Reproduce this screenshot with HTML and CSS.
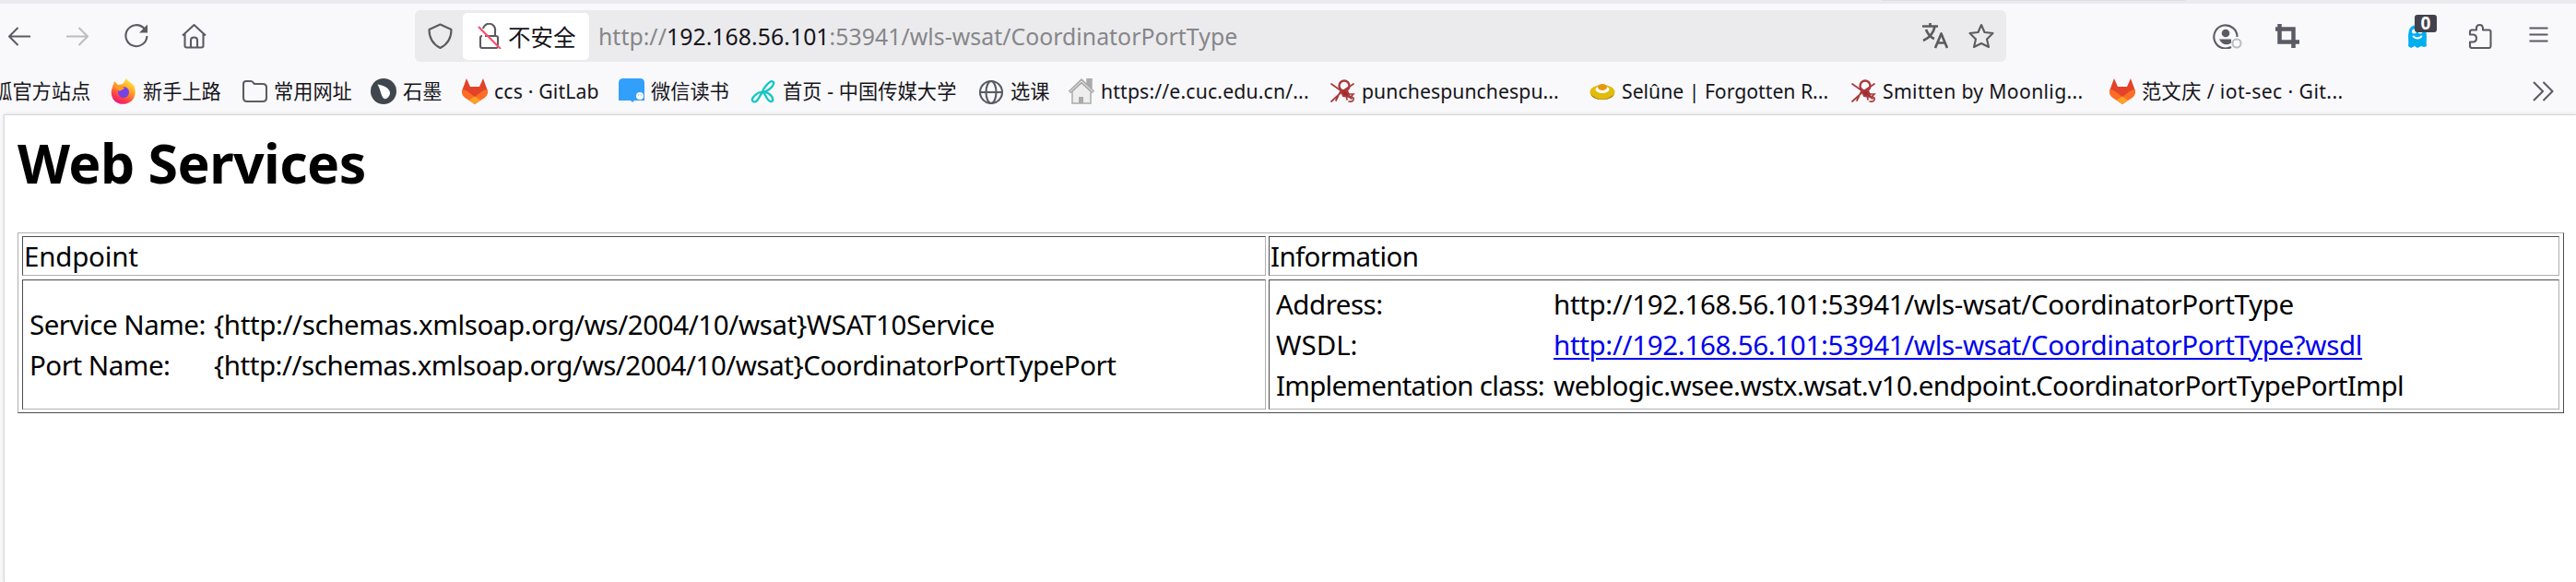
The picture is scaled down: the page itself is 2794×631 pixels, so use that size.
FILE: index.html
```html
<!DOCTYPE html>
<html lang="zh-CN">
<head>
<meta charset="utf-8">
<title>Web Services</title>
<link rel="stylesheet" href="styles.css">
</head>
<body>
<svg class="defs" width="0" height="0">
  <symbol id="gitlab" viewBox="0 0 28 28">
    <path fill="#e24329" d="M5 0 0.6 12 0 16l14 12 14-12-.6-4L23 0l-4 9H9z"/>
    <path fill="#fc6d26" d="M.4 12c2 0 5 1 7 3l6.600 5 6.600-5c2-2 5-3 7-3 1 4 0 7-3 9L14 28 3.400 21C.5 19-.6 16 .4 12z"/>
    <path fill="#fca326" d="m14 19.500 6 4L14 28l-6-4.500z"/>
  </symbol>
  <symbol id="sketch" viewBox="0 0 28 28">
    <g fill="none" stroke="#a93a3d" stroke-linecap="round">
      <circle cx="16" cy="8" r="5.500" stroke-width="2.400"/>
      <path d="M2 6l10 7 12 9M26 6 14 14 2 25M12 14l-5 10M17 13l2 10" stroke-width="1.700"/>
      <path d="M12 13h7l3 7-7-1z" fill="#a52a2e" stroke-width="2"/>
      <path d="M21 17h5l-3 3c5 0 4 6-2 5" stroke-width="1.600"/>
    </g>
  </symbol>
</svg>
<div class="tabstrip"><div class="tab-edge"></div></div>
<header class="chrome">
  <div class="toolbar">
    <nav class="nav">
      <svg class="ico" viewBox="0 0 28 28"><path d="M26 14.500H3M12.500 5 3 14.500l9.500 9.500"/></svg>
      <svg class="ico off" viewBox="0 0 28 28"><path d="M2 14.500h23M15.500 5l9.500 9.500-9.500 9.500"/></svg>
      <svg class="ico" viewBox="0 0 28 28"><path d="M26.400 14A11.500 11.500 0 1 1 23.500 6"/><path class="solid" d="M27 1.500v9h-9z"/></svg>
      <svg class="ico" viewBox="0 0 28 28"><path d="M2 13.500 14.500 2 27 13.500M4.500 11.500v13q0 2 2 2h16q2 0 2-2v-13M11 26.500v-8q0-3 3.500-3t3.500 3v8"/></svg>
    </nav>
    <div class="urlbar">
      <svg class="ico gray shield" viewBox="0 0 28 28"><path d="M14.500 1.500 26.500 7c0 9-3 15.500-12 20C5.500 22.500 2.500 16 2.500 7z"/></svg>
      <div class="security">
        <svg class="ico gray" viewBox="0 0 28 28"><path d="M8 6a6.500 6.500 0 0 1 13 2.500V14M10 14h12q2 0 2 2v9q0 2-2 2H7q-2 0-2-2v-9q0-2 2-2"/><path class="slash" d="M3 4l24 24"/></svg>
        <span>不安全</span>
      </div>
      <div class="url"><span>http://</span><b>192.168.56.101</b><span>:53941/wls-wsat/CoordinatorPortType</span></div>
      <svg class="ico gray translate" viewBox="0 0 28 28"><path d="M0 3.500h17M8.500 0v3.500M13.500 4C12 11 8 16 1 19M4 7c2 5 5 8.500 9 10M14 27l6.500-15.500L27 27M16.500 21.500h8" stroke-width="2.700"/></svg>
      <svg class="ico gray star" viewBox="0 0 28 28"><path stroke-linejoin="round" d="M14 2l3.500 8 9 1-6.500 6.500 2 8.500-8-4-8 4 2-8.500L1.500 11l9-1z"/></svg>
    </div>
    <div class="tools">
      <svg class="ico account" viewBox="0 0 32 28"><path d="M20 26A12.600 12.600 0 1 1 26.500 15"/><circle class="solid" cx="14" cy="11" r="4.300"/><path class="solid" d="M7 17.500h13v4c-4 3-10 2.500-13-4z"/><circle class="status" cx="26" cy="22" r="4.500"/></svg>
      <svg class="ico crop" viewBox="0 0 28 28"><path stroke-width="4.500" d="M5.500 1v19.500H27M1 6.500h19.500V27"/></svg>
      <div class="ghost">
        <svg viewBox="0 0 24 26"><path fill="#00aef0" d="M2 24C3 19 1 14 3 7 5-1 19-1 21 7c2 7 0 12 1 17l-3 1-3-1-4 2-3-2-4 2z"/><circle cx="8.500" cy="8" r="2.500" fill="#fff"/><circle cx="15" cy="8" r="2.500" fill="#fff"/><path d="M7 13q5 5 10 0" fill="none" stroke="#fff" stroke-width="2"/></svg>
        <span class="badge">0</span>
      </div>
      <svg class="ico puzzle" viewBox="0 0 28 28"><path d="M4 7.500h6V6q0-4 3.500-4T17 6v1.500h6.500q2 0 2 2V25q0 2-2 2h-18q-2.500 0-2.500-2v-4.500h3q4 0 4-4t-4-4H3v-3q0-2 2-2"/></svg>
      <svg class="ico menu" viewBox="0 0 28 28"><path d="M3.500 5.500h20M3.500 12.500h20M3.500 19.500h20"/></svg>
    </div>
  </div>
  <div class="bookmarks">
    <div class="bm first"><span>火狐官方站点</span></div>
    <div class="bm"><svg viewBox="0 0 28 28"><defs><linearGradient id="fire" x1=".8" y1="0" x2=".3" y2="1"><stop offset="0" stop-color="#fff14a"/><stop offset=".45" stop-color="#ff9a24"/><stop offset=".8" stop-color="#ff364e"/><stop offset="1" stop-color="#e61587"/></linearGradient></defs><path fill="url(#fire)" d="M4 3l4 4 5-1 4-6c2 4 8 5 9 10 5 19-19 23-24 11C-1 14 2 11 4 3z"/><circle cx="14" cy="15" r="6" fill="#7542e5"/><path fill="#ff9a24" d="M4 9c4-3 8 0 11 1-1 3-4 2-5 4z"/></svg><span>新手上路</span></div>
    <div class="bm"><svg class="ico" viewBox="0 0 28 28"><path d="M2 6q0-3 3-3h5q2 0 3 2l1 1h9q4 0 4 4v11q0 4-4 4H6q-4 0-4-4z"/></svg><span>常用网址</span></div>
    <div class="bm"><svg viewBox="0 0 28 28"><circle cx="14" cy="14" r="14" fill="#40464d"/><path d="M7.500 6.500c7 1 13 4 13.500 9 0 5-5 8-7 6-3-3-3-9-6.500-15z" fill="#fff"/></svg><span>石墨</span></div>
    <div class="bm"><svg><use href="#gitlab"/></svg><span class="t5">ccs · GitLab</span></div>
    <div class="bm"><svg viewBox="0 0 28 28"><path d="M5 0h18q5 0 5 5v19H17l-2 2-2-2H0V5q0-5 5-5z" fill="#329ffb"/><circle cx="23" cy="19" r="4" fill="#fff"/><circle cx="21.700" cy="18" r=".6" fill="#329ffb"/><circle cx="24.300" cy="18" r=".6" fill="#329ffb"/></svg><span>微信读书</span></div>
    <div class="bm"><svg viewBox="0 0 28 28"><g fill="none" stroke="#16c5c6" stroke-width="2.300" stroke-linejoin="round" stroke-linecap="round"><path d="M13 15c0-3 6-10 8-11 2-2 5 0 4 2-1 4-8 9-12 9z"/><path d="M13 15c-5-1-10 5-11 7-1 3 2 4 4 3 3-2 3-5 7-10z"/><path d="M14 15c4-1 10 4 10 7 1 3-2 4-4 2-2-1-3-5-6-9z"/></g></svg><span class="t7">首页 - 中国传媒大学</span></div>
    <div class="bm"><svg class="ico" viewBox="0 0 28 28"><circle cx="14" cy="15" r="12"/><ellipse cx="14" cy="15" rx="5.500" ry="12"/><path d="M2 15h24"/></svg><span>选课</span></div>
    <div class="bm"><svg viewBox="0 0 28 28"><path d="M4 14v13h20V14L14 5z" fill="#eee" stroke="#aaa" stroke-width="1.500"/><path d="M1 15 14 2.500 27 15M21 8V1h3v10" fill="none" stroke="#aaa" stroke-width="3.500"/><path d="M1.500 14.500 14 3l12.500 11.500" fill="none" stroke="#eee"/><path d="M11 27v-7h5v7" fill="#aaa"/></svg><span class="t9">https://e.cuc.edu.cn/...</span></div>
    <div class="bm"><svg><use href="#sketch"/></svg><span class="t10">punchespunchespu...</span></div>
    <div class="bm"><svg viewBox="0 0 28 28"><ellipse cx="14" cy="15" rx="13.500" ry="8" fill="#e2bb0c"/><path d="M1 17q13 11 26 0-3 6-13 6T1 17z" fill="#a77b10"/><ellipse cx="14" cy="12" rx="7.500" ry="4" fill="#fff"/><ellipse cx="14" cy="9.500" rx="5" ry="3.500" fill="#e9960f"/></svg><span class="t11">Selûne | Forgotten R...</span></div>
    <div class="bm"><svg><use href="#sketch"/></svg><span class="t12">Smitten by Moonlig...</span></div>
    <div class="bm"><svg><use href="#gitlab"/></svg><span class="t13">范文庆 / iot-sec · Git...</span></div>
    <svg class="ico more" viewBox="0 0 28 28"><path d="M3 4l10 10L3 24M13.500 4l10 10-10 10"/></svg>
  </div>
</header>
<main class="page">
  <h1>Web Services</h1>
  <div class="table">
    <div class="cell head"><span class="w-endpoint">Endpoint</span></div>
    <div class="cell head"><span class="w-info">Information</span></div>
    <div class="cell body left">
      <span class="w-sn">Service Name:</span><span class="w-sv">{http://schemas.xmlsoap.org/ws/2004/10/wsat}WSAT10Service</span>
      <span class="w-pn">Port Name:</span><span class="w-pv">{http://schemas.xmlsoap.org/ws/2004/10/wsat}CoordinatorPortTypePort</span>
    </div>
    <div class="cell body right">
      <span class="w-ad">Address:</span><span class="w-av">http://192.168.56.101:53941/wls-wsat/CoordinatorPortType</span>
      <span class="w-ws">WSDL:</span><span class="w-av"><a href="#">http://192.168.56.101:53941/wls-wsat/CoordinatorPortType?wsdl</a></span>
      <span class="w-ic">Implementation class:</span><span class="w-iv">weblogic.wsee.wstx.wsat.v10.endpoint.CoordinatorPortTypePortImpl</span>
    </div>
  </div>
</main>
</body>
</html>
```
FILE: styles.css
```css
* { box-sizing: border-box; }
body {
  margin: 0; height: 631px; overflow: hidden; background: #f9f9fb;
  font-family: "Noto Sans", "Noto Sans CJK SC", sans-serif;
  display: flex; flex-direction: column;
}
.defs { position: absolute; }
.tabstrip { height: 4px; background: #eaeaef; flex: none; }
.tab-edge { width: 329px; height: 1px; margin-left: 2041px; background: #dddde2; }
.chrome { height: 120px; flex: none; color: #15141a; }
.ico { width: 28px; height: 28px; flex: none; fill: none; stroke: #5b5b66; stroke-width: 2.1; stroke-linejoin: round; }
.ico .solid { fill: #5b5b66; stroke: none; }
.ico.off { stroke: #bbbbc1; }
.ico.gray { stroke: #5b5b5f; }
.ico .slash { stroke: #ff4f6e; stroke-width: 2.2; }
.toolbar { height: 70px; display: flex; padding-top: 7px; }
.nav { width: 450px; height: 56px; padding-left: 7px; display: flex; align-items: center; gap: 35px; }
.urlbar { width: 1726px; height: 56px; border-radius: 6px; background: #ebebed; display: flex; align-items: center; padding-left: 13px; }
.security { width: 137px; height: 51px; margin-left: 11px; background: #fff; border-radius: 5px; display: flex; align-items: center; padding-left: 14px; gap: 7px; font-size: 24.500px; }
.url { margin-left: 10px; font-size: 24.800px; line-height: 56px; letter-spacing: .05px; white-space: nowrap; color: #86868a; flex: 1; }
.url b { font-weight: 400; color: #15141a; }
.translate { margin-right: 22px; }
.star { margin-right: 13px; }
.tools { display: flex; align-items: center; flex: 1; height: 56px; }
.account { width: 32px; margin-left: 224px; }
.ico .status { stroke: #bbbbc1; }
.crop { margin-left: 35px; stroke-linejoin: miter; }
.ghost { position: relative; width: 24px; height: 26px; margin-left: 115px; }
.ghost svg { width: 24px; height: 26px; display: block; }
.badge { position: absolute; left: 9px; top: -10px; width: 24px; height: 19px; border-radius: 3px; background: #42414d; color: #fff; font-weight: 700; font-size: 19px; line-height: 19px; text-align: center; }
.puzzle { margin-left: 42px; }
.menu { margin-left: 36px; }
.bookmarks {
  height: 50px; display: grid; align-items: center; white-space: nowrap; font-size: 21.200px;
  grid-template-columns: 120px 142px 140px 99px 170px 143px 247px 98px 283px 282px 283px 281px 457px 1fr;
}
.bm { display: flex; align-items: center; gap: 7px; line-height: 50px; }
.bm svg { width: 28px; height: 28px; flex: none; }
.first { margin-left: -29px; }
.t5 { letter-spacing: .17px; }
.t7 { letter-spacing: .1px; }
.t9 { letter-spacing: .17px; }
.t10 { letter-spacing: .08px; }
.t12 { letter-spacing: .33px; }
.t13 { letter-spacing: .4px; }
.page { flex: 1; margin-left: 4px; border-top: 1px solid #d9d9dc; border-left: 1px solid #d9d9dc; background: #fff; color: #000; padding: 11px 13px 0 14px; box-shadow: 0 0 4px rgba(0,0,0,.12); }
h1 { margin: 0 0 36px; font-size: 59px; line-height: 80px; font-weight: 700; letter-spacing: -0.55px; }
.table {
  width: 2762px; height: 196px; display: grid; padding: 3px 4px; gap: 4px 3px;
  grid-template-columns: 1349px 1fr; grid-template-rows: 43px 1fr;
  border: 1px solid; border-color: #b0b0b0 #4c4c4f #4c4c4f #b0b0b0;
  font-size: 29.500px; white-space: nowrap;
}
.cell { border: 1px solid; border-color: #4c4c4f #b0b0b0 #b0b0b0 #4c4c4f; }
.head { line-height: 41px; padding-left: 1px; }
.body { display: grid; align-content: center; line-height: 44px; padding-left: 7px; }
.left { grid-template-columns: 200px 1fr; }
.right { grid-template-columns: 301px 1fr; }
.w-endpoint { letter-spacing: -.2px; }
.w-info { letter-spacing: -.6px; }
.w-sn, .w-pn, .w-ad { letter-spacing: -.48px; }
.w-sv { letter-spacing: -.38px; }
.w-pv { letter-spacing: -.46px; }
.w-av { letter-spacing: -.33px; }
.w-ic { letter-spacing: -.72px; }
.w-iv { letter-spacing: -.52px; }
a { color: #0000ee; text-decoration: underline; text-decoration-thickness: 2px; text-underline-offset: 3px; }
```
